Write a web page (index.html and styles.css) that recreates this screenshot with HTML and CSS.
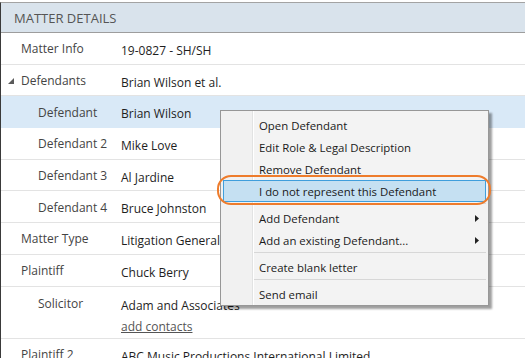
FILE: index.html
```html
<!DOCTYPE html>
<html lang="en">
<head>
  <meta charset="UTF-8">
  <meta name="viewport" content="width=device-width, initial-scale=1.0">
  <title>Matter Details</title>
  <link rel="stylesheet" href="styles.css">
</head>
<body>
  <div class="panel">
    <div class="panel-header">MATTER DETAILS</div>

    <div class="row">
      <div class="label">Matter Info</div>
      <div class="value">19-0827 - SH/SH</div>
    </div>
    <div class="row">
      <div class="label expandable">
        <svg class="expander" width="6" height="6" viewBox="0 0 6 6"><polygon points="6,0 6,6 0,6"/></svg>
        Defendants
      </div>
      <div class="value">Brian Wilson et al.</div>
    </div>
    <div class="row child selected">
      <div class="label">Defendant</div>
      <div class="value">Brian Wilson</div>
    </div>
    <div class="row child">
      <div class="label">Defendant 2</div>
      <div class="value">Mike Love</div>
    </div>
    <div class="row child">
      <div class="label">Defendant 3</div>
      <div class="value">Al Jardine</div>
    </div>
    <div class="row child">
      <div class="label">Defendant 4</div>
      <div class="value">Bruce Johnston</div>
    </div>
    <div class="row">
      <div class="label">Matter Type</div>
      <div class="value">Litigation General</div>
    </div>
    <div class="row">
      <div class="label">Plaintiff</div>
      <div class="value">Chuck Berry</div>
    </div>
    <div class="row child tall">
      <div class="label">Solicitor</div>
      <div class="value">
        <div>Adam and Associates</div>
        <a href="#" class="link">add contacts</a>
      </div>
    </div>
    <div class="row">
      <div class="label">Plaintiff 2</div>
      <div class="value">ABC Music Productions International Limited</div>
    </div>
  </div>

  <!-- context menu opened on the Defendant row -->
  <div class="context-menu">
    <div class="menu-item">Open Defendant</div>
    <div class="menu-item">Edit Role &amp; Legal Description</div>
    <div class="menu-item">Remove Defendant</div>
    <div class="menu-item active">I do not represent this Defendant</div>
    <div class="menu-sep"></div>
    <div class="menu-item">Add Defendant
      <svg class="submenu" width="4" height="7" viewBox="0 0 4 7"><polygon points="0,0 4,3.5 0,7"/></svg>
    </div>
    <div class="menu-item">Add an existing Defendant...
      <svg class="submenu" width="4" height="7" viewBox="0 0 4 7"><polygon points="0,0 4,3.5 0,7"/></svg>
    </div>
    <div class="menu-sep"></div>
    <div class="menu-item">Create blank letter</div>
    <div class="menu-sep"></div>
    <div class="menu-item">Send email</div>
  </div>

  <div class="callout"></div>
</body>
</html>
```

FILE: styles.css
```css
* {
  box-sizing: border-box;
  margin: 0;
  padding: 0;
}

html, body {
  height: 100%;
  overflow: hidden;
}

body {
  font-family: 'Open Sans', 'Noto Sans', sans-serif;
  font-size: 12px;
  color: #1e1e1e;
  background: #fff;
  position: relative;
}

.panel {
  margin-top: 2px;
  height: 356px;
  border-left: 1px solid #3a3a3a;
  border-top: 1px solid #a3a3a3;
}

.panel-header {
  height: 30px;
  padding-left: 13px;
  background: #d9e3ec;
  border-bottom: 1px solid #9d9d9d;
  color: #555;
  font-size: 13px;
  line-height: 30px;
}

.row {
  display: flex;
  align-items: center;
  height: 31.7px;
  border-bottom: 1px solid #e3e3e3;
  line-height: 16px;
}

.row.selected {
  background: #d9e9f7;
  border-bottom-color: #d9e9f7;
}

.row.tall {
  height: 52.4px;
  align-items: flex-start;
}

.label {
  width: 120px;
  flex-shrink: 0;
  padding-left: 20px;
  padding-top: 2px;
  color: #444;
  white-space: nowrap;
}

.label.expandable {
  display: flex;
  align-items: center;
  padding-left: 7px;
}

.expander {
  margin-right: 7px;
  fill: #5a5a5a;
}

.row.child .label {
  padding-left: 37px;
}

.value {
  padding-top: 5px;
  white-space: nowrap;
}

.row.tall .label {
  padding-top: 9px;
}

.row.tall .value {
  padding-top: 11px;
}

.link {
  display: inline-block;
  margin-top: 5px;
  color: #555;
  text-decoration: underline;
}

.context-menu {
  position: absolute;
  left: 220px;
  top: 110px;
  width: 269px;
  height: 196px;
  padding: 3px 2px 1px;
  border: 1px solid #979797;
  background: linear-gradient(to right, #f1f1f1 0 31px, #e2e3e3 31px 32px, #fff 32px 33px, #f3f3f3 33px);
  box-shadow: 3px 3px 2px rgba(0, 0, 0, 0.38);
  font-size: 11.4px;
}

.menu-item {
  position: relative;
  height: 22px;
  line-height: 21px;
  padding-left: 35px;
  border: 1px solid transparent;
  color: #1a1a1a;
  white-space: nowrap;
}

.menu-item.active {
  background: #c5e0f2;
  border-color: #3f9edc;
}

.submenu {
  position: absolute;
  right: 6px;
  top: 7px;
  fill: #222;
}

.menu-sep {
  height: 4px;
  margin-top: 1px;
  margin-left: 31px;
  border-top: 1px solid #d7d7d7;
}

.callout {
  position: absolute;
  left: 217px;
  top: 175px;
  width: 274px;
  height: 30px;
  border: 2px solid #ee7c2c;
  border-radius: 14px;
}
```
